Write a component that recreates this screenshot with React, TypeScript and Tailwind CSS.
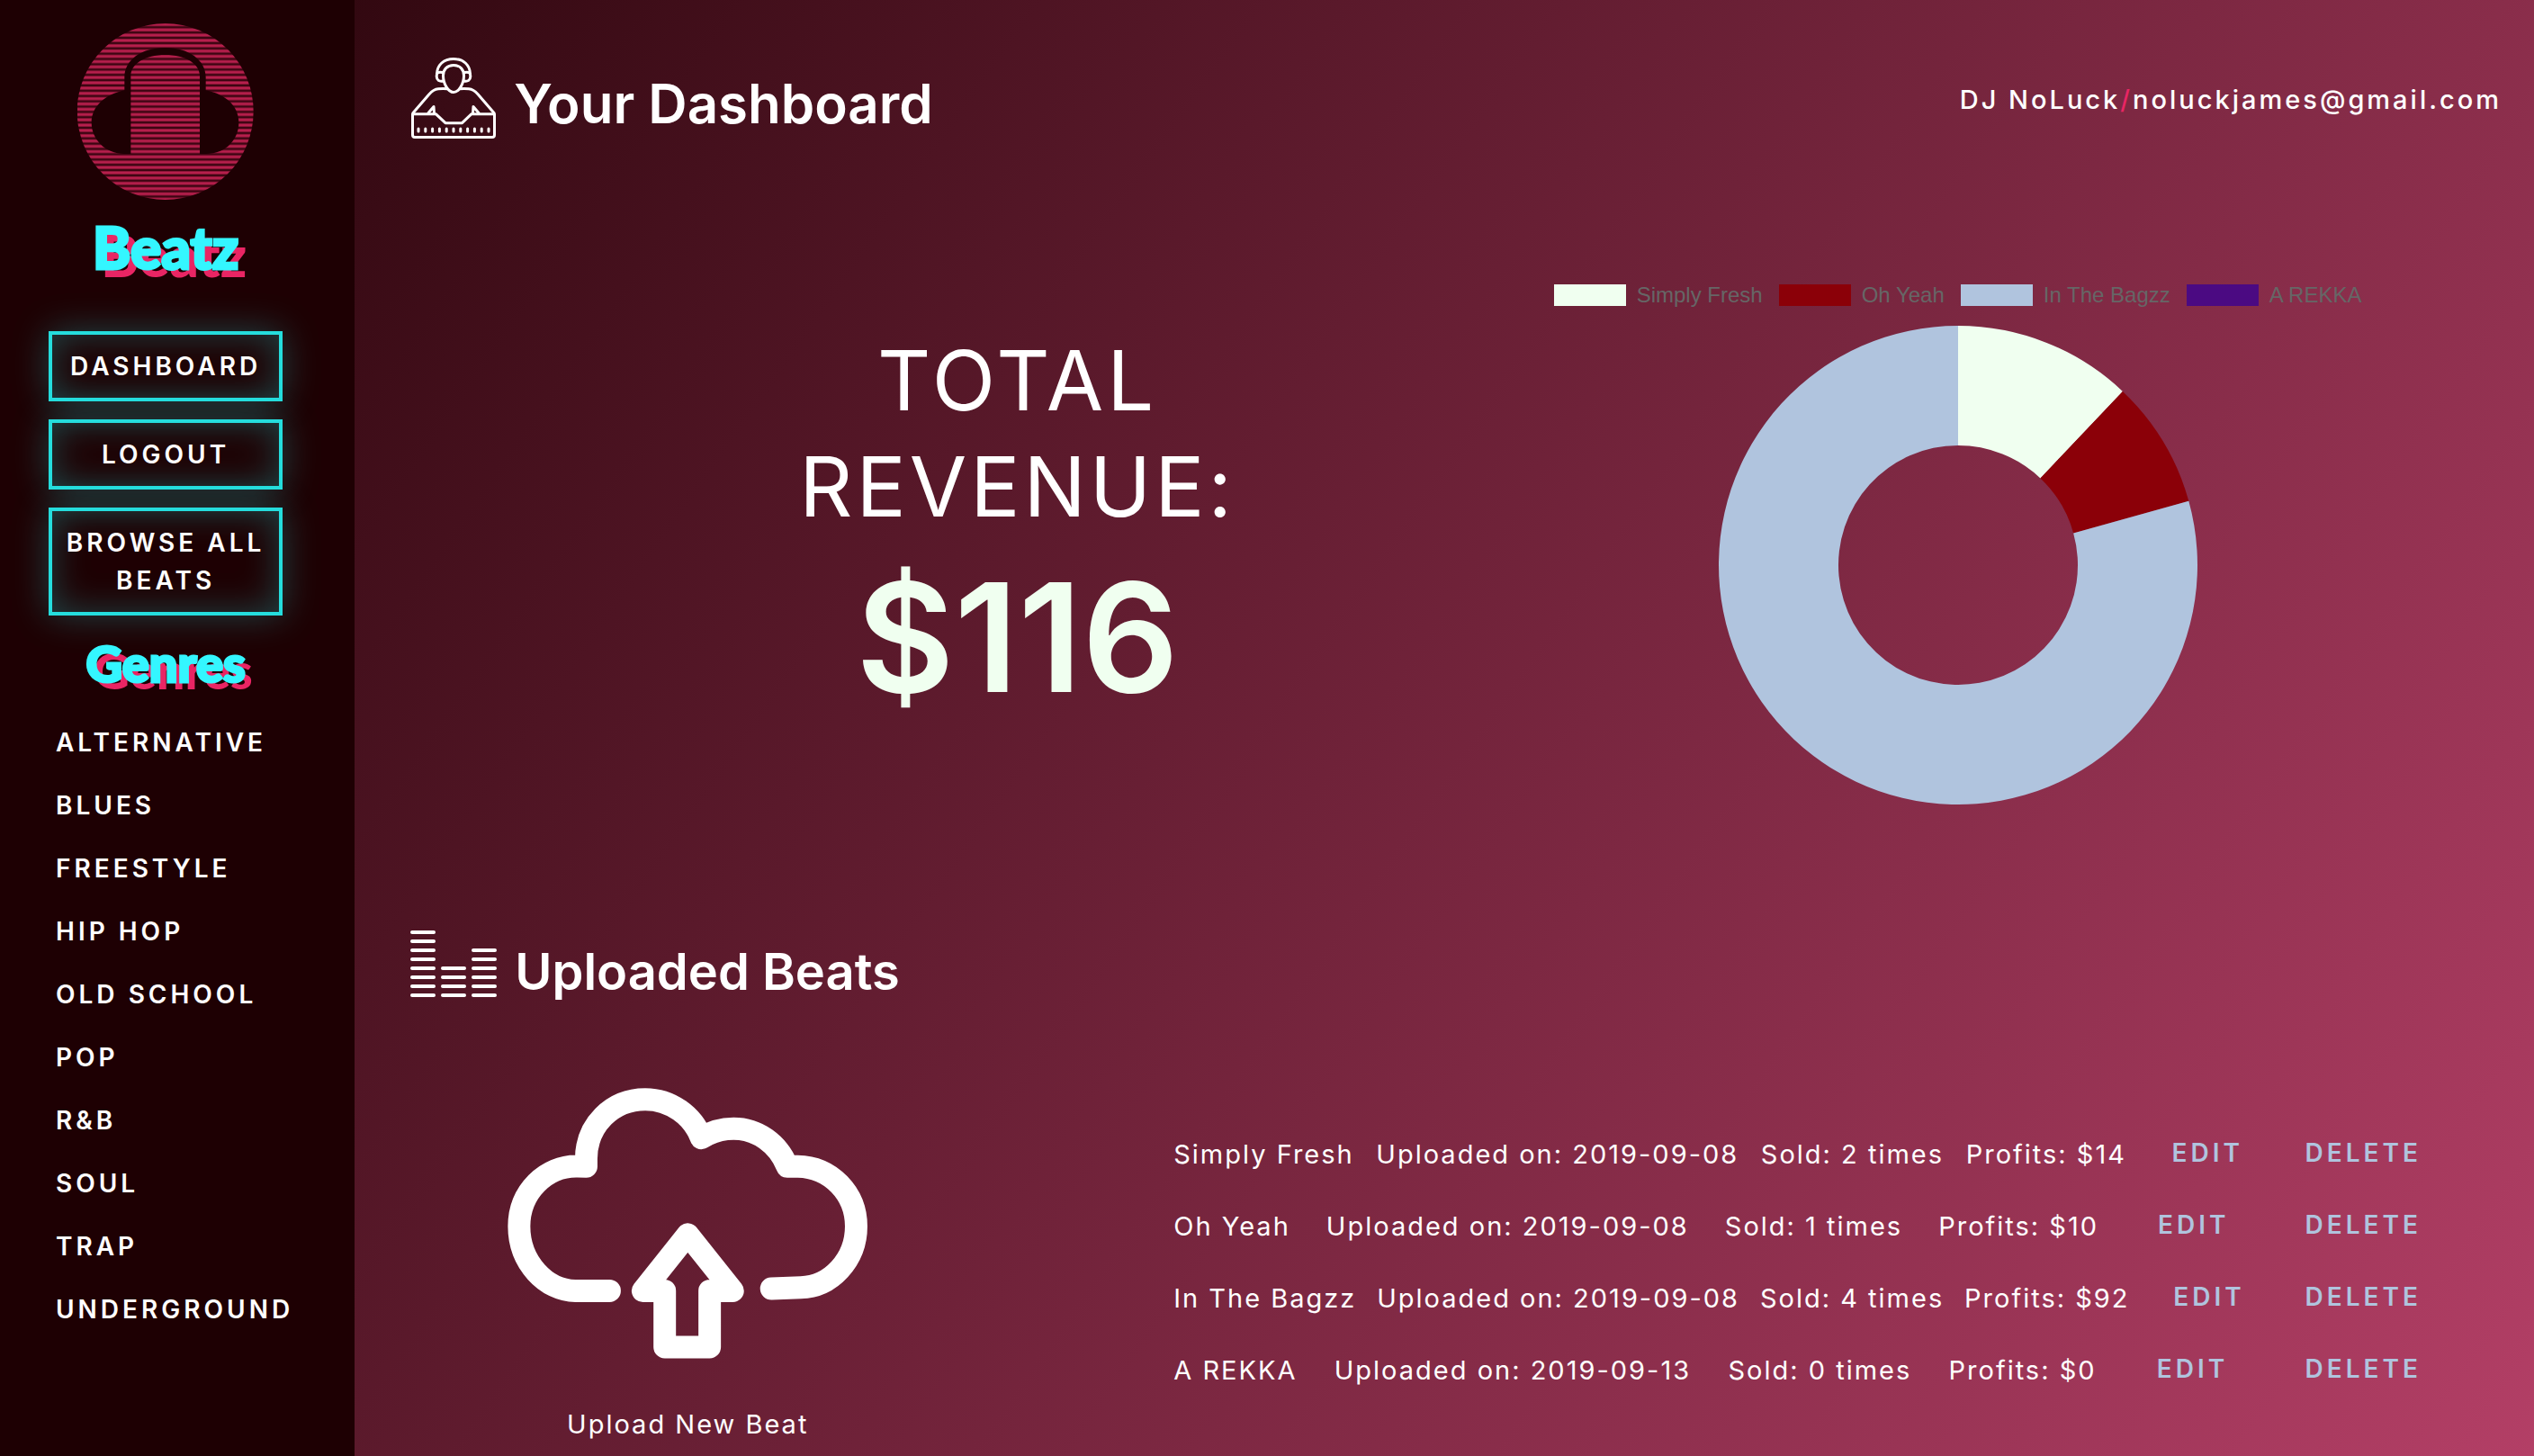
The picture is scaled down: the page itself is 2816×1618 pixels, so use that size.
import React from "react";

const navItems = ["DASHBOARD", "LOGOUT", "BROWSE ALL BEATS"];

const genres = [
  "ALTERNATIVE",
  "BLUES",
  "FREESTYLE",
  "HIP HOP",
  "OLD SCHOOL",
  "POP",
  "R&B",
  "SOUL",
  "TRAP",
  "UNDERGROUND",
];

const beats = [
  { name: "Simply Fresh", date: "2019-09-08", sold: 2, profit: 14, color: "#f0fff0" },
  { name: "Oh Yeah", date: "2019-09-08", sold: 1, profit: 10, color: "#8b0008" },
  { name: "In The Bagzz", date: "2019-09-08", sold: 4, profit: 92, color: "#b0c4de" },
  { name: "A REKKA", date: "2019-09-13", sold: 0, profit: 0, color: "#4b0a82" },
];

function HeadphonesLogo() {
  return (
    <svg viewBox="258 77 588 588" className="mx-auto block h-[196px] w-[196px]" aria-hidden="true">
      <defs>
        <pattern id="stripes" x="0" y="72.2" width="600" height="17.64" patternUnits="userSpaceOnUse">
          <rect width="600" height="17.64" fill="#3c0512" />
          <rect y="4" width="600" height="9.5" fill="#b81f4d" />
        </pattern>
      </defs>
      <circle cx="551" cy="371" r="294" fill="url(#stripes)" />
      <path
        d="M415 300 V256 C415 200 470 158 551 158 C630 158 686 200 686 256 V300 C755 314 796 354 796 408 C796 462 755 512 686 512 H666 V250 C664 212 620 182 551 182 C482 182 438 212 436 250 V512 H415 C350 512 305 462 305 408 C305 354 350 314 415 300 Z"
        fill="#1e0003"
      />
    </svg>
  );
}

function DjIcon() {
  return (
    <svg
      viewBox="0 0 94 90"
      className="h-[90px] w-[94px] shrink-0"
      fill="none"
      stroke="white"
      strokeWidth="3"
      strokeLinecap="round"
      strokeLinejoin="round"
      aria-hidden="true"
    >
      <path d="M47 8.500 C54 8.500 58.500 13 58.500 20 C58.500 29 53 38.500 47 38.500 C41 38.500 35.500 29 35.500 20 C35.500 13 40 8.500 47 8.500 Z" />
      <path d="M28.500 18 C29 8 36 1.500 47 1.500 C58 1.500 65 8 65.500 18" />
      <path d="M35 16.500 C30 15.500 28 17 28.200 21 C28.400 25 31 27 35.500 26" />
      <path d="M59 16.500 C64 15.500 66 17 65.800 21 C65.600 25 63 27 58.500 26" />
      <path d="M2 61.500 L19.700 41 C24 36 27 35 30 34.800 C34 34.500 37 34.500 40 34.800" />
      <path d="M92 61.500 L74.300 41 C70 36 67 35 64 34.800 C60 34.500 57 34.500 54 34.800" />
      <path d="M19 61.500 L25 54.500 L25.500 62" />
      <path d="M75 61.500 L69 54.500 L68.500 62" />
      <path d="M1.500 62.700 H27.300 L38 72.700 H56.500 L67 62.700 H92.500 V86 Q92.500 88.500 90 88.500 H4 Q1.500 88.500 1.500 86 Z" />
      {[0, 1, 2, 3, 4, 5, 6, 7, 8, 9, 10].map((i) => (
        <path key={i} d={`M${8 + i * 7.8} 79 V82`} />
      ))}
    </svg>
  );
}

function EqualizerIcon() {
  const columns = [8, 4, 6];
  return (
    <svg viewBox="0 0 96 74" className="h-[74px] w-[96px] shrink-0" fill="white" aria-hidden="true">
      {columns.map((count, c) =>
        Array.from({ length: count }, (_, r) => (
          <rect key={`${c}-${r}`} x={c * 34} y={70 - r * 10} width="28" height="4" rx="2" />
        ))
      )}
    </svg>
  );
}

function CloudUploadIcon() {
  return (
    <svg
      viewBox="72 88 1200 904"
      className="block h-[301px] w-[400px]"
      fill="none"
      stroke="white"
      strokeWidth="75"
      strokeLinecap="round"
      strokeLinejoin="round"
      aria-hidden="true"
    >
      <path d="M412 765 H298 C200 765 110 670 110 550 C110 435 200 347 305 349.500 L334 350 V325 C334 212 420 126 531 126 C615 126 690 180 718 255 C750 235 785 224 826 224 C905 224 975 274 1005 350 H1040 C1150 352 1235 440 1235 550 C1235 662 1150 752 1050 754 L952 758" />
      <path d="M673 577 L523 765 H596 V953 H746 V765 H823 Z" />
    </svg>
  );
}

function polar(radius: number, fraction: number) {
  const angle = fraction * 2 * Math.PI;
  return `${266 + radius * Math.sin(angle)} ${266 - radius * Math.cos(angle)}`;
}

function Donut() {
  const total = beats.reduce((sum, b) => sum + b.profit, 0);
  let start = 0;
  return (
    <svg viewBox="0 0 532 532" className="h-[532px] w-[532px]" role="img" aria-label="Profits per beat">
      {beats
        .filter((b) => b.profit > 0)
        .map((b) => {
          const from = start;
          const to = start + b.profit / total;
          start = to;
          const large = to - from > 0.5 ? 1 : 0;
          return (
            <path
              key={b.name}
              fill={b.color}
              d={`M${polar(266, from)} A266 266 0 ${large} 1 ${polar(266, to)} L${polar(133, to)} A133 133 0 ${large} 0 ${polar(133, from)} Z`}
            />
          );
        })}
    </svg>
  );
}

function Sidebar() {
  return (
    <aside className="w-[14%] shrink-0 bg-[#1e0003] pt-[26px]">
      <div className="pr-[80px] pl-[54px]">
        <HeadphonesLogo />
        <a
          href="#home"
          className="mt-[21px] block text-center font-['Lato',sans-serif] text-[64px] leading-[64px] font-black text-[#34f6ff] [-webkit-text-stroke:3px_#34f6ff] [text-shadow:9px_9px_0_#e92564]"
        >
          Beatz
        </a>
        <nav className="mt-[61px] flex flex-col gap-5">
          {navItems.map((item) => (
            <button
              key={item}
              type="button"
              className="border-4 border-[#25dddd] py-[14px] text-center text-[28px] leading-[42px] font-semibold tracking-[4px] shadow-[0_0_40px_rgba(37,221,221,0.3),inset_0_0_40px_rgba(37,221,221,0.3)]"
            >
              {item}
            </button>
          ))}
        </nav>
        <h2 className="mt-[21px] text-center font-['Lato',sans-serif] text-[56px] leading-[64px] font-black text-[#34f6ff] [-webkit-text-stroke:3px_#34f6ff] [text-shadow:8px_8px_0_#e92564]">
          Genres
        </h2>
      </div>
      <ul className="mt-[21px] pl-[62px]">
        {genres.map((genre) => (
          <li key={genre} className="text-[28px] leading-[70px] font-semibold tracking-[4px] whitespace-nowrap">
            <a href="#genre">{genre}</a>
          </li>
        ))}
      </ul>
    </aside>
  );
}

export default function App() {
  return (
    <div className="flex min-h-screen bg-[linear-gradient(125deg,#240207,#b33f66)] font-['Inter',sans-serif] text-white">
      <Sidebar />
      <main className="min-w-0 flex-1">
        <header className="flex items-center justify-between py-16 pr-9 pl-[63px]">
          <div className="flex items-end gap-5">
            <DjIcon />
            <h1 className="text-[60px] leading-[78px] font-semibold">Your Dashboard</h1>
          </div>
          <p className="pt-1 text-[29px] leading-[42px] font-medium tracking-[3px]">
            DJ NoLuck<span className="text-[#e92564]">/</span>noluckjames@gmail.com
          </p>
        </header>

        <section className="grid grid-cols-2 pt-[98px] pr-[118px] pl-[214px]">
          <div className="pt-12 text-center">
            <h2 className="mx-auto max-w-[560px] text-[92px] leading-[118px] tracking-[4px]">TOTAL REVENUE:</h2>
            <p className="text-[168px] leading-[216px] font-semibold text-[#f0fff0]">$116</p>
          </div>
          <div className="flex flex-col items-center gap-[22px]">
            <ul className="flex gap-[18px] font-['Liberation_Sans',sans-serif] text-[24px] leading-[24px] text-[#666666]">
              {beats.map((b) => (
                <li key={b.name} className="flex gap-3">
                  <span className="h-6 w-20" style={{ backgroundColor: b.color }} />
                  {b.name}
                </li>
              ))}
            </ul>
            <Donut />
          </div>
        </section>

        <div className="mt-[140px] flex items-end gap-5 pl-[62px]">
          <EqualizerIcon />
          <h2 className="text-[56px] leading-[56px] font-semibold">Uploaded Beats</h2>
        </div>

        <section className="flex items-start pr-[125px] pl-[170px]">
          <a href="#upload" className="mt-[101px] flex flex-col items-center">
            <CloudUploadIcon />
            <span className="mt-[52px] text-[29px] leading-[42px] tracking-[2px]">Upload New Beat</span>
          </a>
          <ul className="mt-[135px] ml-[340px] flex-1">
            {beats.map((b) => (
              <li key={b.name} className="flex h-20 items-start justify-between text-[29px] leading-[80px] tracking-[2px]">
                <span>{b.name}</span>
                <span>Uploaded on: {b.date}</span>
                <span>Sold: {b.sold} times</span>
                <span>Profits: ${b.profit}</span>
                <button
                  type="button"
                  className="px-[26px] text-[28px] leading-[76px] font-semibold tracking-[4px] text-[#b0c4de]"
                >
                  EDIT
                </button>
                <button
                  type="button"
                  className="pl-[18px] text-[28px] leading-[76px] font-semibold tracking-[4px] text-[#b0c4de]"
                >
                  DELETE
                </button>
              </li>
            ))}
          </ul>
        </section>
      </main>
    </div>
  );
}
